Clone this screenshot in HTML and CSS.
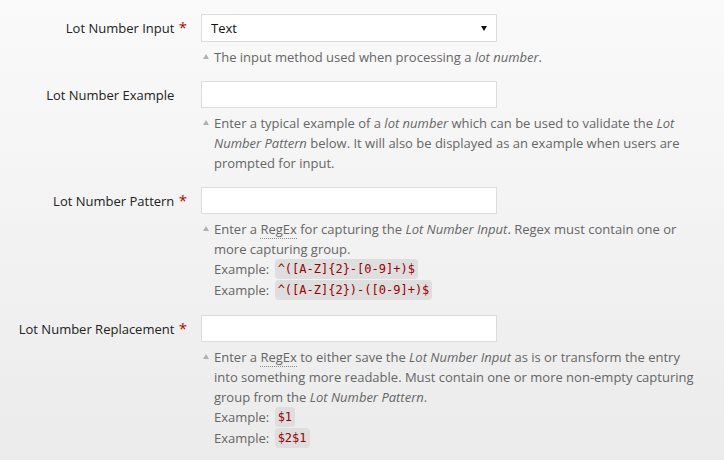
FILE: index.html
```html
<!DOCTYPE html>
<html lang="en">
<head>
    <meta charset="UTF-8">
    <title>Lot Number Settings</title>
    <link rel="stylesheet" href="styles.css">
</head>
<body>
    <form class="settings">
        <div class="field">
            <label class="field-label" for="lot-input">Lot Number Input <span class="required">*</span></label>
            <div class="field-body">
                <div class="select">
                    <select id="lot-input">
                        <option>Text</option>
                    </select>
                    <span class="select-arrow"></span>
                </div>
                <p class="help">The input method used when processing a <em>lot number</em>.</p>
            </div>
        </div>

        <div class="field">
            <label class="field-label" for="lot-example">Lot Number Example <span class="required blank">*</span></label>
            <div class="field-body">
                <input type="text" id="lot-example">
                <p class="help">Enter a typical example of a <em>lot number</em> which can be used to validate the <em>Lot Number Pattern</em> below. It will also be displayed as an example when users are prompted for input.</p>
            </div>
        </div>

        <div class="field">
            <label class="field-label" for="lot-pattern">Lot Number Pattern <span class="required">*</span></label>
            <div class="field-body">
                <input type="text" id="lot-pattern">
                <p class="help">Enter a <abbr title="Regular Expression">RegEx</abbr> for capturing the <em>Lot Number Input</em>. Regex must contain one or more capturing group.<br>
                    Example: <code>^([A-Z]{2}-[0-9]+)$</code><br>
                    Example: <code>^([A-Z]{2})-([0-9]+)$</code></p>
            </div>
        </div>

        <div class="field">
            <label class="field-label" for="lot-replacement">Lot Number Replacement <span class="required">*</span></label>
            <div class="field-body">
                <input type="text" id="lot-replacement">
                <p class="help">Enter a <abbr title="Regular Expression">RegEx</abbr> to either save the <em>Lot Number Input</em> as is or transform the entry into something more readable. Must contain one or more non-empty capturing group from the <em>Lot Number Pattern</em>.<br>
                    Example: <code>$1</code><br>
                    Example: <code>$2$1</code></p>
            </div>
        </div>
    </form>
</body>
</html>
```

FILE: styles.css
```css
html {
    min-height: 100%;
    background: linear-gradient(to bottom, #fafafa 0%, #ebebeb 100%);
}

body {
    margin: 0;
    padding: 14px 0 0 0;
    font-family: 'Open Sans', 'Noto Sans', sans-serif;
    font-size: 13px;
    color: #333;
}

.settings {
    width: 704px;
}

.field {
    display: grid;
    grid-template-columns: 187px 296px;
    column-gap: 14px;
    margin-bottom: 14px;
}

.field-label {
    text-align: right;
    line-height: 26px;
    color: #222;
    white-space: nowrap;
}

.required {
    color: #b30000;
    font-size: 15px;
    margin-left: 1px;
}

.required.blank {
    visibility: hidden;
}

.field-body {
    min-width: 0;
}

input[type="text"],
.select select {
    display: block;
    box-sizing: border-box;
    width: 296px;
    height: 27px;
    margin: 0;
    padding: 0 9px;
    border: 1px solid #dcdcdc;
    background: #fff;
    font-family: inherit;
    font-size: 13px;
    color: #111;
    outline: none;
}

.select {
    position: relative;
    width: 296px;
}

.select select {
    height: 28px;
    appearance: none;
    -webkit-appearance: none;
    border-radius: 0;
}

.select-arrow {
    position: absolute;
    right: 10px;
    top: 12px;
    border-left: 3px solid transparent;
    border-right: 3px solid transparent;
    border-top: 5px solid #111;
}

.help {
    position: relative;
    width: 492px;
    margin: 5px 0 0 0;
    padding-left: 13px;
    line-height: 20px;
    color: #666;
}

.help::before {
    content: "";
    position: absolute;
    left: 2px;
    top: 7px;
    border-left: 3px solid transparent;
    border-right: 3px solid transparent;
    border-bottom: 5px solid #aab2b8;
}

.help em {
    font-style: italic;
}

.help abbr {
    text-decoration: none;
    border-bottom: 1px dotted #888;
}

code {
    display: inline-block;
    vertical-align: top;
    margin: 0 0 1px 2px;
    padding: 0 3px;
    line-height: 20px;
    border-radius: 4px;
    background: #dedede;
    font-family: 'DejaVu Sans Mono', monospace;
    font-size: 12px;
    color: #990000;
}
```
